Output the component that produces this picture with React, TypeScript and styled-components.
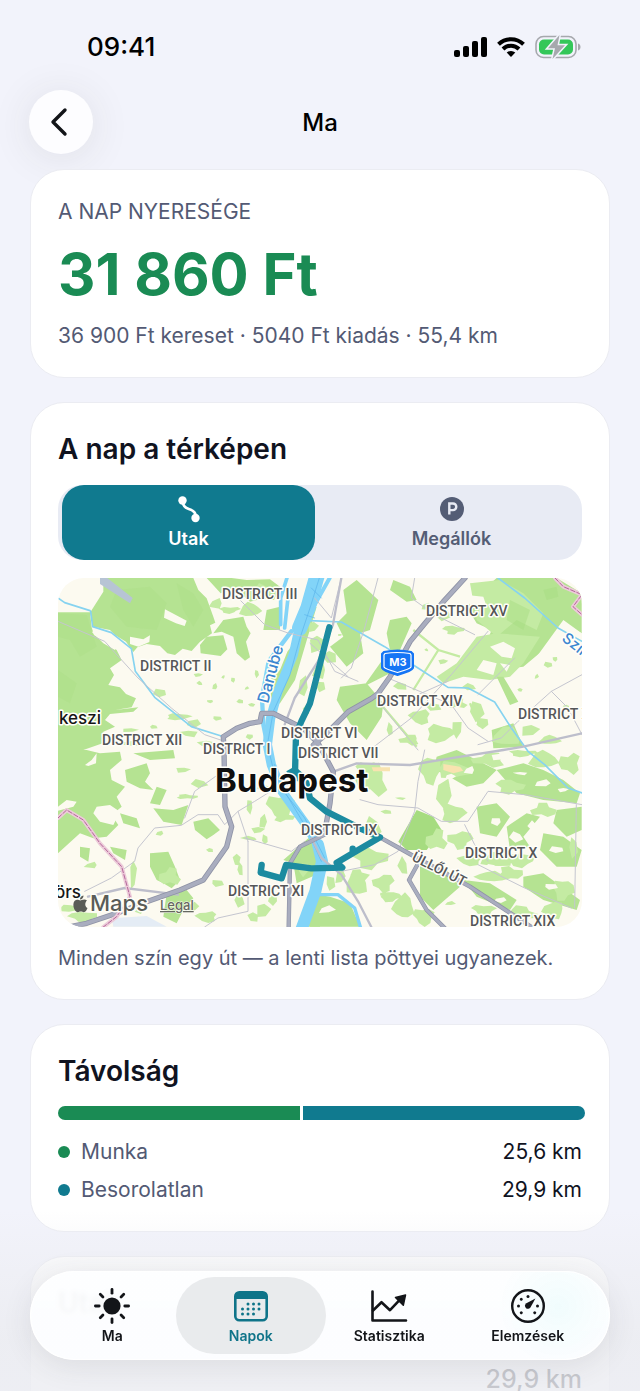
import React from "react";
import styled, { createGlobalStyle } from "styled-components";

const color = {
  page: "#f2f3fb",
  card: "#ffffff",
  ink: "#10131f",
  muted: "#535a74",
  green: "#1a8b54",
  teal: "#107a8f",
  track: "#e8ebf4",
};

const GlobalStyle = createGlobalStyle`
  *, *::before, *::after { box-sizing: border-box; }
  body {
    margin: 0;
    background: ${color.page};
    color: ${color.ink};
    font-family: Inter, "Liberation Sans", sans-serif;
  }
  h1, h2, p, dl, dd, dt { margin: 0; }
  button { font: inherit; border: 0; padding: 0; cursor: pointer; }
`;

const Screen = styled.div`
  position: relative;
  height: 100vh;
  overflow: hidden;
  display: flex;
  flex-direction: column;
`;

const StatusBar = styled.div`
  display: flex;
  justify-content: space-between;
  align-items: center;
  height: 90px;
  padding: 4px 59px 0 87px;
  flex: none;
`;

const Clock = styled.time`
  font-size: 26px;
  line-height: 32px;
  font-weight: 500;
  color: #000;
`;

const StatusIcons = styled.div`
  display: flex;
  align-items: center;
  gap: 10px;
`;

const NavBar = styled.header`
  display: grid;
  grid-template-columns: 64px 1fr 64px;
  align-items: center;
  padding: 0 29px;
  height: 64px;
  flex: none;
`;

const BackButton = styled.button`
  display: grid;
  place-items: center;
  width: 64px;
  height: 64px;
  border-radius: 50%;
  background: #fdfdff;
  box-shadow: 0 4px 40px rgba(60, 60, 50, 0.1);
`;

const NavTitle = styled.h1`
  padding-top: 2px;
  text-align: center;
  font-size: 24px;
  line-height: 32px;
  font-weight: 500;
  color: #000;
`;

const Content = styled.main`
  display: flex;
  flex-direction: column;
  gap: 24px;
  padding: 15px 30px 0;
`;

const Card = styled.section`
  display: flex;
  flex-direction: column;
  flex: none;
  padding: 28px 27px 27px;
  background: ${color.card};
  border: 1px solid #ebecf2;
  border-radius: 34px;
`;

const CardTitle = styled.h2`
  font-size: 28px;
  line-height: 36px;
  font-weight: 600;
`;

const Note = styled.p<{ $small?: boolean }>`
  font-size: ${(p) => (p.$small ? 20 : 21)}px;
  line-height: 28px;
  color: ${color.muted};
`;

const Amount = styled.p`
  padding: 12px 0;
  font-size: 58px;
  line-height: 72px;
  font-weight: 700;
  color: ${color.green};
`;

const Segments = styled.div`
  display: grid;
  grid-template-columns: 1fr 1fr;
  gap: 10px;
  margin: 18px 0;
  padding: 0 4px;
  border-radius: 24px;
  background: ${color.track};
`;

const Segment = styled.button<{ $active?: boolean }>`
  display: flex;
  flex-direction: column;
  align-items: center;
  justify-content: center;
  gap: 4px;
  height: 75px;
  border-radius: 22px;
  font-size: 18px;
  line-height: 24px;
  font-weight: 600;
  color: ${(p) => (p.$active ? "#fff" : "#545d75")};
  background: ${(p) => (p.$active ? color.teal : "transparent")};
`;

const MapFrame = styled.div`
  height: 349px;
  margin-bottom: 17px;
  border-radius: 26px;
  overflow: hidden;
  svg { display: block; width: 100%; height: 100%; }
`;

const SplitBar = styled.div`
  display: flex;
  gap: 3px;
  height: 14px;
  margin: 17px -3px 18px 0;
  border-radius: 7px;
  overflow: hidden;
`;

const SplitPart = styled.div<{ $tone: string }>`
  background: ${(p) => p.$tone};
`;

const Legend = styled.dl`
  display: flex;
  flex-direction: column;
  gap: 10px;
`;

const LegendRow = styled.div`
  display: flex;
  justify-content: space-between;
  font-size: 21px;
  line-height: 28px;
`;

const LegendName = styled.dt<{ $tone: string }>`
  display: flex;
  align-items: center;
  gap: 11px;
  color: ${color.muted};
  &::before {
    content: "";
    width: 12px;
    height: 12px;
    border-radius: 50%;
    background: ${(p) => p.$tone};
  }
`;

const TripRow = styled.div`
  display: flex;
  justify-content: flex-end;
  padding-top: 42px;
  font-size: 25px;
  line-height: 32px;
  font-weight: 500;
`;

const BottomFade = styled.div`
  position: absolute;
  left: 0;
  right: 0;
  bottom: 0;
  height: 180px;
  pointer-events: none;
  background: linear-gradient(
    rgba(236, 237, 241, 0),
    rgba(236, 237, 241, 0.45) 30%,
    rgba(235, 236, 240, 0.8) 70%,
    rgba(236, 237, 242, 0.84)
  );
`;

const TabBar = styled.nav`
  position: absolute;
  left: 30px;
  right: 30px;
  bottom: 31px;
  display: grid;
  grid-template-columns: repeat(4, 1fr);
  padding: 6px 13px;
  border-radius: 45px;
  background: radial-gradient(circle at 91% 40%, rgba(240, 252, 253, 0.96), rgba(253, 254, 255, 0.93) 60px);
  backdrop-filter: blur(2px);
  box-shadow: 0 6px 30px rgba(60, 60, 70, 0.1), inset 0 0 0 1px #fff;
`;

const Tab = styled.a<{ $active?: boolean }>`
  display: flex;
  flex-direction: column;
  align-items: center;
  gap: 1px;
  height: 77px;
  margin: 0 -6px;
  padding-top: 10px;
  border-radius: 39px;
  font-size: 14px;
  line-height: 20px;
  font-weight: 600;
  text-decoration: none;
  color: ${(p) => (p.$active ? "#0f7489" : "#131519")};
  background: ${(p) => (p.$active ? "#e9ebed" : "transparent")};
`;

/* ---------- icons ---------- */

const SignalIcon = () => (
  <svg width="33" height="22" viewBox="0 0 33 22" aria-hidden="true">
    <rect x="0" y="14" width="6" height="7" rx="2" />
    <rect x="9" y="10" width="6" height="11" rx="2" />
    <rect x="18" y="5" width="6" height="16" rx="2" />
    <rect x="27" y="1" width="6" height="20" rx="2" />
  </svg>
);

const WifiIcon = () => (
  <svg width="28" height="22" viewBox="0 0 28 22" fill="none" stroke="#000" strokeWidth="4" aria-hidden="true">
    <path d="M1.5 8.2a18 18 0 0 1 25 0" />
    <path d="M6 13a11.5 11.5 0 0 1 16 0" />
    <path d="M14 21l-4.3-4.4a6.3 6.3 0 0 1 8.6 0z" fill="#000" stroke="none" />
  </svg>
);

const BatteryIcon = () => (
  <svg width="46" height="24" viewBox="0 0 46 24" aria-hidden="true">
    <rect x="1" y="1.5" width="40" height="21" rx="7.5" fill="none" stroke="#a6a8ad" strokeWidth="1.6" />
    <rect x="4" y="4.5" width="34" height="15" rx="5" fill="#34c759" />
    <path d="M43 8.5c1.6.5 2.5 1.9 2.5 3.5s-.9 3-2.5 3.5z" fill="#a6a8ad" />
    <path d="M24.5 0L13 13.200h7L17.5 24 30 10.300h-7.500z" fill="#a6a8ad" stroke="#f2f3fb" strokeWidth="3" paintOrder="stroke" />
  </svg>
);

const BackIcon = () => (
  <svg width="28" height="32" viewBox="0 0 28 32" fill="none" stroke="#131519" strokeWidth="3.4" strokeLinecap="round" strokeLinejoin="round" aria-hidden="true">
    <path d="M18 4L6 16l12 12" />
  </svg>
);

const RouteIcon = () => (
  <svg width="24" height="28" viewBox="0 0 24 28" fill="#fff" aria-hidden="true">
    <circle cx="5.5" cy="5.5" r="4.200" />
    <circle cx="18.500" cy="23" r="4.200" />
    <path d="M6 7c0 4 2 5.800 5.800 7 4.200 1.300 7 3 7 7" fill="none" stroke="#fff" strokeWidth="2.600" />
  </svg>
);

const ParkingIcon = () => (
  <svg width="24" height="28" viewBox="0 0 24 28" aria-hidden="true">
    <circle cx="12" cy="14" r="12" fill="#545d75" />
    <path d="M9.300 19.500v-11h3.700a3.300 3.300 0 0 1 0 6.600H9.300" fill="none" stroke="#e8ebf4" strokeWidth="2.400" />
  </svg>
);

const SunIcon = () => (
  <svg width="38" height="38" viewBox="-19 -19 38 38" aria-hidden="true">
    <circle r="8.600" fill="#131519" />
    {[0, 45, 90, 135, 180, 225, 270, 315].map((a) => (
      <path key={a} d="M0-12.800v-3.800" transform={`rotate(${a})`} stroke="#131519" strokeWidth="2.800" strokeLinecap="round" />
    ))}
  </svg>
);

const calendarDots = [
  [16, 14], [21.5, 14], [27, 14],
  [10.5, 19], [16, 19], [21.5, 19], [27, 19],
  [10.5, 24], [16, 24], [21.5, 24],
];

const CalendarIcon = () => (
  <svg width="38" height="38" viewBox="0 -3 38 38" aria-hidden="true">
    <rect x="3.300" y="2.300" width="31.400" height="28" rx="4" fill="none" stroke="#0f7489" strokeWidth="2.600" />
    <path d="M3 9V6a4 4 0 0 1 4-4h24a4 4 0 0 1 4 4v3z" fill="#0f7489" />
    {calendarDots.map(([x, y]) => (
      <circle key={`${x}-${y}`} cx={x} cy={y} r="1.500" fill="#0f7489" />
    ))}
  </svg>
);

const ChartIcon = () => (
  <svg width="38" height="38" viewBox="0 0 38 38" fill="none" stroke="#131519" strokeWidth="2.600" strokeLinecap="round" strokeLinejoin="round" aria-hidden="true">
    <path d="M2.500 4.500v29h33.500" />
    <path d="M3 23.500l8.500-8.300 8.500 8 9-9.500" />
    <path d="M35.500 8l-10 2.500 7.800 7.800z" fill="#131519" strokeWidth="1.500" />
  </svg>
);

const GaugeIcon = () => (
  <svg width="38" height="38" viewBox="-19 -19 38 38" aria-hidden="true">
    <circle r="15.800" fill="none" stroke="#131519" strokeWidth="2.400" />
    {[-135, -90, -45, 0, 90, 135].map((a) => (
      <circle key={a} cy="-9.500" r="1.500" transform={`rotate(${a})`} fill="#131519" />
    ))}
    <path d="M7.400-7.600L2.600 1.200A3 3 0 1 1-1.600-2.800z" fill="#131519" />
  </svg>
);

/* ---------- map ---------- */

type Patch = [x: number, y: number, w: number, h: number];

// Angular polygon with a repeatable outline, for parks and fields.
const patchPath = ([x, y, w, h]: Patch, i: number) => {
  const steps = w > 50 ? 10 : 5;
  return (
    "M" +
    Array.from({ length: steps }, (_, k) => {
      const a = (k / steps) * Math.PI * 2 + i;
      const r = 0.6 + 0.65 * Math.abs(Math.sin(i * 12.9 + k * 7.3));
      return `${Math.round(x + (Math.cos(a) * w * r) / 2)} ${Math.round(y + (Math.sin(a) * h * r) / 2)}`;
    }).join("L") +
    "Z"
  );
};

const Patches = ({ items, fill }: { items: Patch[]; fill: string }) => (
  <path fill={fill} d={items.map(patchPath).join("")} />
);

const land = "#fcfaf0";
const wood = "#b5e392";
const meadow = "#c4eba3";
const field = "#a6dc80";

const NorthWest = () => (
  <g transform="translate(-24 -24)">
    <path fill={wood} d="M160 24H430L445 60 470 85 490 140 496 158 480 166 486 190 450 215 425 243 398 236 375 255 352 250 330 228 290 222 262 232 250 246 228 215 195 195 180 180 130 170 120 128 160 65Z" />
    <path fill={wood} d="M24 127H120L125 172 132 195 165 215 200 240 215 270 180 295 192 315 175 345 210 352 228 372 258 385 245 412 195 420 265 412 250 425 180 432 165 450 195 470 160 485 158 520 100 540H24Z" />
    <path fill={land} d="M345 118L410 152 404 168 378 160 342 143ZM240 200L280 208 300 196 298 216 265 230 240 222ZM125 185L180 182 210 212 195 240 160 220Z" />
    <path fill={field} opacity=".25" d="M24 130L110 135 140 230 90 260 60 210 24 200ZM200 60L300 50 350 100 320 180 230 170 180 110ZM380 40L430 70 460 120 430 170 400 120ZM24 300L80 340 60 400 24 380Z" />
    <path fill={wood} d="M470 24H545L590 30 660 28 690 50 672 90 640 85 600 95 575 72 550 90 540 60 512 70ZM520 150L580 140 590 170 602 190 588 215 600 262 585 272 560 250 550 200 515 185 490 190ZM470 200L520 196 532 238 512 258 452 250 450 225ZM650 120L690 110 690 180 640 180ZM745 200L770 130 800 110 735 330 690 400 665 410 660 330 690 300 712 245Z" />
    <path fill="#b7c4d4" d="M150 24H172L248 84 240 100 150 42Z" />
    <Patches fill={meadow} items={[[500, 100, 50, 30], [540, 120, 60, 20], [600, 120, 60, 40], [640, 60, 50, 40], [550, 330, 14, 14], [495, 350, 16, 18], [445, 315, 24, 14], [450, 340, 18, 14], [330, 370, 46, 26], [480, 395, 24, 10], [590, 355, 14, 10], [605, 405, 18, 12], [570, 395, 20, 14], [500, 445, 30, 12], [430, 460, 46, 22], [385, 440, 70, 18], [415, 490, 50, 26], [310, 470, 26, 12], [620, 310, 14, 24], [520, 320, 12, 10], [240, 480, 44, 14], [470, 520, 50, 18], [235, 520, 90, 14], [600, 500, 24, 14], [760, 350, 30, 60], [790, 170, 30, 40], [770, 420, 20, 30]]} />
  </g>
);

const NorthEast = () => (
  <g transform="translate(756 -24)">
    <path fill={wood} d="M560 24H740L815 70V190L760 160 700 240 640 290 560 300 520 240 545 180 500 160 470 110 520 60Z" />
    <path fill={meadow} d="M480 40L570 30 640 70 700 130 680 180 620 150 560 200 500 150ZM500 200L560 190 690 200 640 280 600 320 540 330 460 320 400 340 380 320 440 280Z" />
    <path fill={field} opacity=".45" d="M600 90L660 120 640 180 590 150ZM700 60L740 50 745 80 710 90Z" />
    <path fill={land} d="M540 230L580 215 615 235 605 265 575 260ZM520 270L560 280 550 315 500 300ZM570 280L600 285 590 305ZM470 75L520 80 530 110 480 105ZM760 150L815 190V300L700 330 640 320 680 260Z" />
    <path fill={wood} d="M100 60L140 30 205 90 180 180 150 190 160 250 110 290 60 230 100 200 80 160 110 130ZM240 150L290 140 305 160 270 240 240 310 160 350 210 280 240 240 230 190ZM90 350L170 340 220 400 215 440 170 510 120 460 80 390ZM250 30L300 50 320 90 290 95 240 60ZM560 320L580 320 625 395 600 405ZM545 480L610 460 640 530 550 535Z" />
    <Patches fill={meadow} items={[[30, 300, 50, 50], [20, 220, 40, 60], [60, 260, 40, 40], [400, 130, 50, 40], [430, 180, 60, 24], [350, 110, 30, 20], [400, 275, 26, 18], [350, 240, 12, 10], [715, 285, 30, 18], [735, 268, 20, 14], [680, 320, 12, 16], [630, 360, 14, 12], [270, 350, 40, 24], [30, 350, 30, 30], [330, 440, 60, 40], [390, 490, 80, 50], [440, 400, 60, 30], [370, 410, 50, 24], [500, 420, 50, 60], [300, 510, 60, 30], [660, 480, 50, 40], [720, 510, 60, 26], [480, 350, 40, 20], [520, 460, 40, 30], [590, 500, 80, 50], [90, 195, 12, 8], [770, 410, 20, 12], [240, 480, 20, 40], [440, 480, 40, 50]]} />
    <path fill="none" stroke={meadow} strokeWidth="7" d="M310 180L385 240 450 260M385 240L310 360M210 400L320 530M480 400L510 470" />
  </g>
);

const SouthWest = () => (
  <g transform="translate(-24 516)">
    <path fill={wood} d="M24 0H110L150 10 210 5 215 30 180 60 185 90 225 110 200 140 215 170 185 195 205 225 170 260 130 265 90 250 24 310Z" />
    <path fill={land} d="M24 170L50 150 80 155 70 170 24 182ZM105 45L125 30 140 10 138 40 115 48ZM140 170L180 165 210 185 190 225 150 215 130 190Z" />
    <path fill={wood} d="M225 60L290 40 300 70 285 95 310 120 270 115 230 95ZM250 10L370 0 375 25 300 30ZM320 110L350 120 330 165 300 160ZM310 175L370 180 415 165 395 225 340 215ZM430 215L475 205 510 240 490 255 470 268 435 240ZM300 310L355 305 375 350 390 390 365 415 340 400 320 390 300 350ZM350 430L410 420 430 445 400 480 380 520 340 500ZM90 290L120 295 115 335 90 320ZM210 190L260 205 270 235 220 220ZM700 330L780 260 810 310V370L740 400 730 340ZM780 420L810 390V530H770ZM180 290L230 300 225 330 190 310Z" />
    <path fill="#e4ecf5" d="M185 505L290 498 350 530H190Z" />
    <Patches fill={meadow} items={[[125, 345, 50, 18], [250, 370, 18, 100], [480, 300, 20, 14], [450, 100, 50, 24], [600, 170, 20, 40], [640, 215, 24, 40], [625, 240, 36, 24], [600, 265, 50, 14], [645, 270, 20, 30], [690, 170, 80, 70], [700, 200, 60, 30], [560, 330, 20, 40], [570, 360, 16, 40], [500, 400, 40, 20], [470, 500, 60, 30], [430, 470, 30, 30], [360, 380, 60, 50], [100, 500, 80, 30], [60, 475, 60, 20], [270, 480, 30, 20], [640, 480, 40, 50], [610, 500, 30, 30], [570, 450, 30, 40], [670, 450, 30, 30], [330, 250, 24, 14], [400, 60, 40, 20], [410, 140, 60, 14], [640, 115, 40, 20], [760, 360, 40, 40]]} />
  </g>
);

const SouthEast = () => (
  <g transform="translate(756 516)">
    <path fill={field} d="M320 180L370 200 395 240 350 300 290 300 265 275Z" />
    <path fill={wood} d="M330 345L410 360 450 410 370 480 330 440ZM380 20L440 0 500 30 560 60 520 100 470 110 400 70 370 60ZM560 60L640 40 700 60 760 90 810 130 800 160 700 150 620 130ZM740 180L815 170V240L770 260 730 220ZM500 170L560 160 600 200 560 260 510 250ZM590 230L650 190 690 200 640 260 660 290 600 300ZM700 250L760 260 815 300 800 350 740 350 690 300ZM0 430L60 440 120 460 150 530H0ZM640 380L700 370 810 450 800 480 700 450 640 410ZM460 390L540 400 620 450 600 480 500 440Z" />
    <Patches fill={meadow} items={[[190, 90, 90, 90], [170, 60, 60, 50], [230, 185, 30, 14], [190, 230, 50, 60], [180, 325, 100, 60], [140, 400, 60, 70], [220, 400, 60, 50], [280, 350, 30, 60], [280, 470, 60, 70], [340, 500, 60, 50], [90, 380, 30, 50], [150, 380, 50, 30], [240, 440, 60, 30], [60, 400, 30, 40], [400, 130, 50, 80], [430, 190, 70, 50], [380, 270, 60, 60], [360, 60, 60, 80], [430, 60, 90, 50], [540, 30, 100, 40], [640, 10, 80, 20], [700, 30, 80, 50], [780, 40, 60, 60], [600, 110, 80, 40], [560, 330, 90, 40], [450, 270, 70, 50], [600, 370, 70, 40], [540, 380, 80, 30], [520, 480, 70, 30], [630, 490, 90, 40], [730, 480, 60, 50], [760, 420, 60, 60], [700, 180, 70, 40], [480, 330, 70, 30], [420, 460, 30, 14], [270, 145, 30, 10], [630, 330, 80, 40], [790, 290, 30, 60]]} />
    <Patches fill={land} items={[[480, 60, 40, 22], [570, 20, 50, 24], [440, 110, 36, 24], [620, 260, 40, 30], [560, 215, 34, 22], [700, 100, 50, 20], [760, 120, 30, 16], [670, 230, 30, 36], [740, 300, 50, 20], [370, 130, 24, 30], [50, 480, 50, 24], [200, 440, 26, 14], [540, 350, 30, 14], [720, 410, 44, 16], [570, 450, 40, 14], [420, 80, 30, 18], [630, 70, 40, 12]]} />
    <path fill="#f8e3b0" d="M400 42L450 50 460 62 430 70 400 60ZM185 52H240V64H190Z" />
  </g>
);

const Water = () => (
  <g fill="none" stroke="#82d4f8" strokeLinejoin="round" strokeLinecap="round">
    <path strokeWidth="46" d="M778 -10L750 90 725 150" />
    <path strokeWidth="28" d="M728 130L706 230 660 340 638 420 628 500 640 560 672 640 745 742 785 810" />
    <path strokeWidth="36" d="M780 800L792 850 772 940 728 1060" />
    <path strokeWidth="11" d="M690 -10L668 60 668 140M690 60L680 150" />
    <path strokeWidth="13" d="M700 160L632 250 612 360 616 440 628 500" />
    <path strokeWidth="12" d="M815 0L770 80" />
    <path strokeWidth="10" d="M775 950L840 950 890 990 908 1050" />
    <path stroke="#5ab3ea" strokeWidth="2" d="M784 0L756 90 726 180 696 290 646 400 628 500 650 590 745 750 790 850M760 30L790 60M740 110L770 120M650 560L676 640 740 720 800 840" />
    <path strokeWidth="5" stroke="#86d3f0" d="M0 60L20 74 96 98M98 100L104 146 160 164 220 212 232 280 290 358 400 446 490 474M756 128L850 132 980 206 1080 270 1170 328 1230 330 1310 372 1360 450 1410 520 1460 560 1530 630 1572 645M1320 0L1400 60 1500 150 1572 190" />
  </g>
);

const mainRoads =
  "M1221 0L1156 71 1101 136 1056 191 1026 246 996 296 961 346 941 361 871 401 796 476 766 501M496 476L536 451 576 436 606 431 611 406 646 406 736 451 780 495 826 581 816 676 801 756M496 476L498 516 501 686 521 746 506 806 436 906 366 936 266 971 176 1006 86 1036 30 1047";
const sideRoads =
  "M966 778L1061 831 1236 926 1440 1060M1086 846L1053 906 1106 996 1170 1060M800 770L726 806 696 856 692 1047";
const cityLimit =
  "M0 720L26 696 76 726 126 796 191 866 216 956 176 1016 136 1047M1491 0L1516 26 1572 50 1545 86 1572 110";

const Roads = () => (
  <g fill="none" strokeLinejoin="round" strokeLinecap="round">
    <g stroke="#c4c5cf" strokeWidth="3">
      <path d="M0 130L140 190 240 300 340 390 440 470 500 490M540 60L620 140 690 165 780 186 830 280 900 310M770 60L820 120 850 0M960 0L920 150 880 270 850 300M756 196L870 296M1070 0L1060 60 1130 110 1250 170M1290 160L1180 290 1060 420 930 520M1080 350L1170 310M990 300L1180 380 1230 450 1290 490M1260 350L1370 240M1572 290L1480 340 1380 430 1330 480 1260 500M1480 340L1530 390 1572 470M960 370L1050 480 1080 516" />
      <path d="M80 940L160 900 230 850 240 810 290 750 370 742 420 710 480 710 500 740 540 700 590 670 670 620 700 640M380 720L410 640 480 590M560 780L700 820 740 790M570 790V1000L480 1020 440 1047M540 700L570 790M906 665L960 680 1080 690 1150 730 1230 730 1290 640 1400 650 1572 680M1260 860L1400 930 1540 990M1555 680L1550 990M1220 740L1250 800 1290 850M1100 516L1080 610 1070 700 1020 820 950 860 850 880" />
      <path stroke="#bdbecb" strokeWidth="7" d="M826 581L896 556 1056 561 1176 541 1336 516 1396 506 1572 466M850 0L825 140 780 250 710 360 680 440M760 780L790 840 850 890 900 970 940 1047M90 956L200 930 360 950" />
    </g>
    <g stroke="#8f93a6">
      <path d={mainRoads} strokeWidth="16" />
      <path d={sideRoads} strokeWidth="13" />
    </g>
    <g stroke="#a9adbf">
      <path d={mainRoads} strokeWidth="11" />
      <path d={sideRoads} strokeWidth="9" />
    </g>
    <path d={cityLimit} stroke="#eccbd9" strokeWidth="12" />
    <path d={cityLimit} stroke="#b4659a" strokeWidth="3" strokeDasharray="14 6" />
  </g>
);

const MapText = styled.text<{ $size: number; $weight?: number; $tone?: string; $family?: string }>`
  font-family: ${(p) => p.$family ?? "Inter"}, sans-serif;
  font-size: ${(p) => p.$size}px;
  font-weight: ${(p) => p.$weight ?? 500};
  fill: ${(p) => p.$tone ?? "#555658"};
  stroke: #fffef8;
  stroke-width: 3px;
  stroke-linejoin: round;
  paint-order: stroke;
`;

const MapLink = styled(MapText)`
  text-decoration: underline;
  text-decoration-color: #64675f;
  stroke-width: 1px;
`;

const districts: [string, number, number][] = [
  ["DISTRICT III", 164, 21],
  ["DISTRICT XV", 368, 38],
  ["DISTRICT II", 82, 93],
  ["DISTRICT XIV", 319, 128],
  ["DISTRICT XVI", 460, 141],
  ["DISTRICT XII", 44, 167],
  ["DISTRICT I", 145, 176],
  ["DISTRICT VI", 223, 160],
  ["DISTRICT VII", 240, 180],
  ["DISTRICT IX", 243, 257],
  ["DISTRICT X", 407, 280],
  ["DISTRICT XI", 170, 318],
  ["DISTRICT XIX", 412, 348],
];

const CityMap = () => (
  <svg viewBox="0 0 524 349" preserveAspectRatio="xMidYMid slice" role="img" aria-label="Budapest">
    <rect width="524" height="349" fill={land} />
    <g transform="scale(.33333)">
      <NorthWest />
      <NorthEast />
      <SouthWest />
      <SouthEast />
      <Water />
      <Roads />
      <path fill="none" stroke="#1c8ba0" strokeWidth="19" strokeLinecap="round" strokeLinejoin="round" d="M814 148L756 376 730 430 714 470 711 586 745 614 756 661 806 701 906 751 966 778 884 826V812 826L836 854 853 869 760 871 684 861 671 901 608 884 611 861" />
      <path fill="#1c8ba0" d="M685 580L711 565 740 590 740 615 700 605Z" />
    </g>
    {districts.map(([name, x, y]) => (
      <MapText key={name} x={x} y={y} $size={14} $family="Roboto">{name}</MapText>
    ))}
    <MapText $size={16} $tone="#3b86d0" transform="translate(210 126) rotate(-75)">Danube</MapText>
    <MapText $size={15} $tone="#3b86d0" transform="translate(503 62) rotate(38)">Szilas</MapText>
    <MapText $size={14} $family="Roboto" transform="translate(353 282) rotate(27)">ÜLLŐI ÚT</MapText>
    <MapText $size={17} $tone="#161616" x={1} y={146}>keszi</MapText>
    <MapText $size={17} $tone="#161616" x={-3} y={320}>örs</MapText>
    <MapText $size={33} $weight={700} $tone="#0e0e0e" x={157} y={214}>Budapest</MapText>
    <g>
      <path d="M326 74q14-3 27 0l2 2v14q-1 3-15.500 7-14.500-4-15.500-7V76z" fill="#1575f5" stroke="#1575f5" strokeWidth="2" />
      <path d="M327 75.500q12-2 25 0l1 1.500v12q-1 2-13.500 5.500-12.500-3.500-13.500-5.500V77z" fill="#1575f5" stroke="#fff" strokeWidth="1.200" />
      <text x="340" y="88" textAnchor="middle" fontFamily="Inter, sans-serif" fontSize="11" fontWeight="700" fill="#fff">M3</text>
    </g>
    <path fill="#5a5c57" d="M29 322.500c-1.800-1.500-4.200-.8-5.200-.4-1.300.5-1.700.5-3 0-2.300-.9-5 .2-5.400 4-.4 4.200 2.200 8.200 4.400 8.200 1.200 0 1.600-.7 3-.7s1.800.7 3 .7c1.800 0 3.200-2.600 3.700-4.200-2.700-1.400-3-5.500-.5-7.600zM25.500 317.500c-2.300.3-3.700 2.200-3.500 4 2.100 0 3.700-2 3.500-4z" />
    <MapText $size={22} $tone="#5a5c57" x={32} y={333}>Maps</MapText>
    <MapLink $size={13} $tone="#64675f" x={102} y={332}>Legal</MapLink>
  </svg>
);

/* ---------- page ---------- */

const distances = [
  { name: "Munka", km: 25.6, label: "25,6 km", tone: color.green },
  { name: "Besorolatlan", km: 29.9, label: "29,9 km", tone: color.teal },
];

const tabs = [
  { name: "Ma", icon: <SunIcon /> },
  { name: "Napok", icon: <CalendarIcon />, active: true },
  { name: "Statisztika", icon: <ChartIcon /> },
  { name: "Elemzések", icon: <GaugeIcon /> },
];

export default function App() {
  return (
    <>
      <GlobalStyle />
      <Screen>
        <StatusBar>
          <Clock>09:41</Clock>
          <StatusIcons>
            <SignalIcon />
            <WifiIcon />
            <BatteryIcon />
          </StatusIcons>
        </StatusBar>
        <NavBar>
          <BackButton aria-label="Vissza">
            <BackIcon />
          </BackButton>
          <NavTitle>Ma</NavTitle>
        </NavBar>
        <Content>
          <Card>
            <Note>A NAP NYERESÉGE</Note>
            <Amount>31 860 Ft</Amount>
            <Note>36 900 Ft kereset · 5040 Ft kiadás · 55,4 km</Note>
          </Card>
          <Card>
            <CardTitle>A nap a térképen</CardTitle>
            <Segments>
              <Segment $active aria-pressed="true">
                <RouteIcon />
                Utak
              </Segment>
              <Segment aria-pressed="false">
                <ParkingIcon />
                Megállók
              </Segment>
            </Segments>
            <MapFrame>
              <CityMap />
            </MapFrame>
            <Note $small>Minden szín egy út — a lenti lista pöttyei ugyanezek.</Note>
          </Card>
          <Card>
            <CardTitle>Távolság</CardTitle>
            <SplitBar>
              {distances.map((d) => (
                <SplitPart key={d.name} $tone={d.tone} style={{ flex: d.km }} />
              ))}
            </SplitBar>
            <Legend>
              {distances.map((d) => (
                <LegendRow key={d.name}>
                  <LegendName $tone={d.tone}>{d.name}</LegendName>
                  <dd>{d.label}</dd>
                </LegendRow>
              ))}
            </Legend>
          </Card>
          <Card>
            <CardTitle>Utak</CardTitle>
            <TripRow>29,9 km</TripRow>
          </Card>
        </Content>
        <BottomFade />
        <TabBar>
          {tabs.map((t) => (
            <Tab key={t.name} href="#" $active={t.active} aria-current={t.active ? "page" : undefined}>
              {t.icon}
              {t.name}
            </Tab>
          ))}
        </TabBar>
      </Screen>
    </>
  );
}
